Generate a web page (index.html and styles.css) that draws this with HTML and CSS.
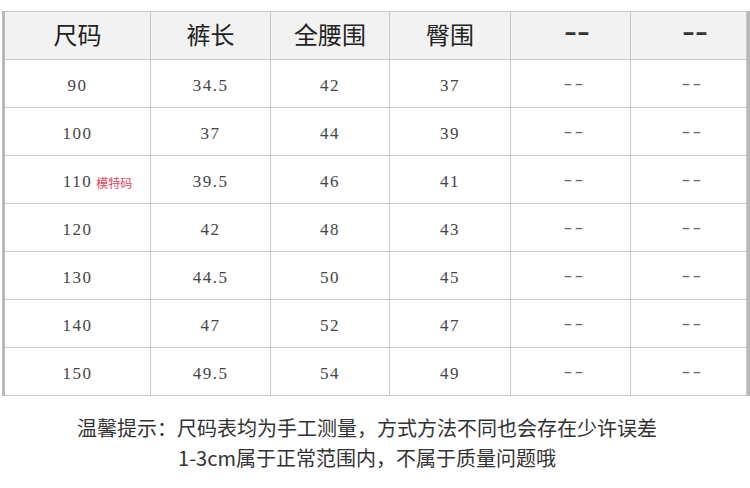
FILE: index.html
```html
<!DOCTYPE html>
<html lang="zh">
<head>
<meta charset="utf-8">
<title>尺码表</title>
<link rel="stylesheet" href="styles.css">
</head>
<body>
<div class="sheet">
  <div class="table">
    <div class="cell head">尺码</div>
    <div class="cell head">裤长</div>
    <div class="cell head">全腰围</div>
    <div class="cell head">臀围</div>
    <div class="cell head"><span class="hdash">--</span></div>
    <div class="cell head"><span class="hdash">--</span></div>

    <div class="cell">90</div><div class="cell">34.5</div><div class="cell">42</div><div class="cell">37</div><div class="cell"><span class="bdash">--</span></div><div class="cell"><span class="bdash">--</span></div>
    <div class="cell">100</div><div class="cell">37</div><div class="cell">44</div><div class="cell">39</div><div class="cell"><span class="bdash">--</span></div><div class="cell"><span class="bdash">--</span></div>
    <div class="cell"><span class="num">110<span class="tag">模特码</span></span></div><div class="cell">39.5</div><div class="cell">46</div><div class="cell">41</div><div class="cell"><span class="bdash">--</span></div><div class="cell"><span class="bdash">--</span></div>
    <div class="cell">120</div><div class="cell">42</div><div class="cell">48</div><div class="cell">43</div><div class="cell"><span class="bdash">--</span></div><div class="cell"><span class="bdash">--</span></div>
    <div class="cell">130</div><div class="cell">44.5</div><div class="cell">50</div><div class="cell">45</div><div class="cell"><span class="bdash">--</span></div><div class="cell"><span class="bdash">--</span></div>
    <div class="cell">140</div><div class="cell">47</div><div class="cell">52</div><div class="cell">47</div><div class="cell"><span class="bdash">--</span></div><div class="cell"><span class="bdash">--</span></div>
    <div class="cell">150</div><div class="cell">49.5</div><div class="cell">54</div><div class="cell">49</div><div class="cell"><span class="bdash">--</span></div><div class="cell"><span class="bdash">--</span></div>
  </div>
  <div class="note">
    <p>温馨提示：尺码表均为手工测量，方式方法不同也会存在少许误差</p>
    <p>1-3cm属于正常范围内，不属于质量问题哦</p>
  </div>
</div>
</body>
</html>
```

FILE: styles.css
```css
html, body {
  margin: 0;
  padding: 0;
  background: #ffffff;
}

.sheet {
  width: 750px;
  height: 488px;
  padding-top: 11px;
  box-sizing: border-box;
}

.table {
  margin-left: 2px;
  width: 748px;
  box-sizing: border-box;
  display: grid;
  grid-template-columns: 145px 119px 118px 120px 119px 115px;
  grid-auto-rows: 47px;
  gap: 1px;
  padding: 1px 1px 1px 0;
  background: #c9c9c9;
  border-left: 3px solid #b9b9b9;
  border-right: 3px solid #b9b9b9;
}

.cell {
  background: #ffffff;
  display: flex;
  align-items: center;
  justify-content: center;
  padding-top: 4px;
  box-sizing: border-box;
  font-family: "Liberation Serif", "DejaVu Serif", serif;
  font-size: 17px;
  letter-spacing: 1.5px;
  color: #454545;
}

.bdash {
  display: inline-block;
  font-family: "Liberation Mono", monospace;
  font-size: 16px;
  letter-spacing: -2.3px;
  transform: scaleX(1.5);
  color: #6a6a6a;
  padding-left: 2px;
  margin-top: -1px;
}

.head {
  background: #f2f2f2;
  padding-top: 0;
  padding-bottom: 5px;
  font-family: "Noto Sans CJK SC", "Noto Sans", sans-serif;
  font-size: 24px;
  letter-spacing: 0;
  color: #222222;
}

.hdash {
  display: inline-block;
  font-family: "Liberation Mono", monospace;
  font-size: 22px;
  font-weight: bold;
  letter-spacing: -4.8px;
  transform: scaleX(1.55);
  color: #333333;
  padding-left: 3px;
}

.num {
  position: relative;
}

.tag {
  position: absolute;
  left: 100%;
  top: 2px;
  margin-left: 4px;
  white-space: nowrap;
  font-family: "Noto Sans CJK SC", sans-serif;
  font-size: 12px;
  letter-spacing: 0;
  color: #e4425a;
}

.note {
  padding-top: 17px;
  padding-right: 16px;
  text-align: center;
  font-family: "Noto Sans CJK SC", "Noto Sans", sans-serif;
  font-size: 20px;
  color: #333333;
}

.note p {
  margin: 0;
  line-height: 30px;
}
```
